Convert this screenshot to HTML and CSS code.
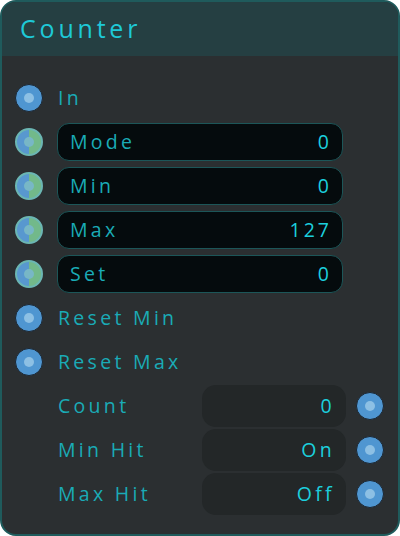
FILE: index.html
```html
<!DOCTYPE html>
<html>
<head>
<meta charset="utf-8">
<link rel="stylesheet" href="styles.css">
</head>
<body>
<div class="node">
  <div class="header">Counter</div>
  <div class="body">
    <div class="row">
      <span class="port"></span>
      <span class="label">In</span>
    </div>
    <div class="row">
      <span class="port mixed"></span>
      <div class="field"><span class="flabel">Mode</span><span class="fval">0</span></div>
    </div>
    <div class="row">
      <span class="port mixed"></span>
      <div class="field"><span class="flabel">Min</span><span class="fval">0</span></div>
    </div>
    <div class="row">
      <span class="port mixed"></span>
      <div class="field"><span class="flabel">Max</span><span class="fval">127</span></div>
    </div>
    <div class="row">
      <span class="port mixed"></span>
      <div class="field"><span class="flabel">Set</span><span class="fval">0</span></div>
    </div>
    <div class="row">
      <span class="port"></span>
      <span class="label">Reset Min</span>
    </div>
    <div class="row">
      <span class="port"></span>
      <span class="label">Reset Max</span>
    </div>
    <div class="row out">
      <span></span>
      <div class="outcell"><span class="label">Count</span><div class="ofield">0</div></div>
      <span class="port"></span>
    </div>
    <div class="row out">
      <span></span>
      <div class="outcell"><span class="label">Min Hit</span><div class="ofield">On</div></div>
      <span class="port"></span>
    </div>
    <div class="row out">
      <span></span>
      <div class="outcell"><span class="label">Max Hit</span><div class="ofield">Off</div></div>
      <span class="port"></span>
    </div>
  </div>
</div>
</body>
</html>
```
FILE: styles.css
```css
html, body {
  margin: 0;
  padding: 0;
  background: #ffffff;
}
body {
  font-family: "Open Sans", Lato, sans-serif;
}
.node {
  width: 400px;
  height: 536px;
  box-sizing: border-box;
  border: 2px solid #1f5b5c;
  border-radius: 16px;
  background: #2b2f31;
  overflow: hidden;
}
.header {
  height: 54px;
  background: #253f42;
  color: #1ec9d7;
  font-size: 25px;
  letter-spacing: 3.8px;
  padding-left: 18px;
  line-height: 52px;
}
.body {
  padding-top: 20px;
  display: flex;
  flex-direction: column;
}
.row {
  height: 44px;
  display: grid;
  grid-template-columns: 28px 1fr 28px;
  column-gap: 14px;
  padding: 0 14px 0 13px;
  align-items: center;
}
.port {
  width: 28px;
  height: 28px;
  box-sizing: border-box;
  border-radius: 50%;
  background: #4f96d1;
  border: 1.5px solid #1b2631;
  position: relative;
}
.port::after {
  content: "";
  position: absolute;
  left: 50%;
  top: 50%;
  width: 10px;
  height: 10px;
  margin: -5px 0 0 -5px;
  border-radius: 50%;
  background: #8dc0e4;
}
.port.mixed {
  background: linear-gradient(90deg, #5898cf 50%, #72b98a 50%);
  border: 2px solid #6bb6b3;
}
.port.mixed::after {
  background: #78b7c6;
}
.label {
  color: #1aabb6;
  font-size: 19.5px;
  letter-spacing: 3.3px;
  padding-left: 1px;
  line-height: 24px;
}
.field {
  height: 38px;
  box-sizing: border-box;
  background: #050b0d;
  border: 1px solid #1c5658;
  border-radius: 12px;
  display: flex;
  align-items: center;
  justify-content: space-between;
  padding: 0 10px 0 12px;
  margin-right: -1px;
}
.flabel {
  color: #1aabb6;
  font-size: 19.5px;
  letter-spacing: 3.3px;
  line-height: 24px;
}
.fval {
  color: #1ccfdd;
  font-size: 19.5px;
  letter-spacing: 3px;
  line-height: 24px;
}
.outcell {
  display: flex;
  align-items: center;
  justify-content: space-between;
  margin-right: -4px;
}
.ofield {
  width: 144px;
  height: 42px;
  box-sizing: border-box;
  background: #232728;
  border-radius: 14px;
  color: #1ccfdd;
  font-size: 19.5px;
  letter-spacing: 3.3px;
  text-align: right;
  padding-right: 11px;
  line-height: 42px;
}
```
